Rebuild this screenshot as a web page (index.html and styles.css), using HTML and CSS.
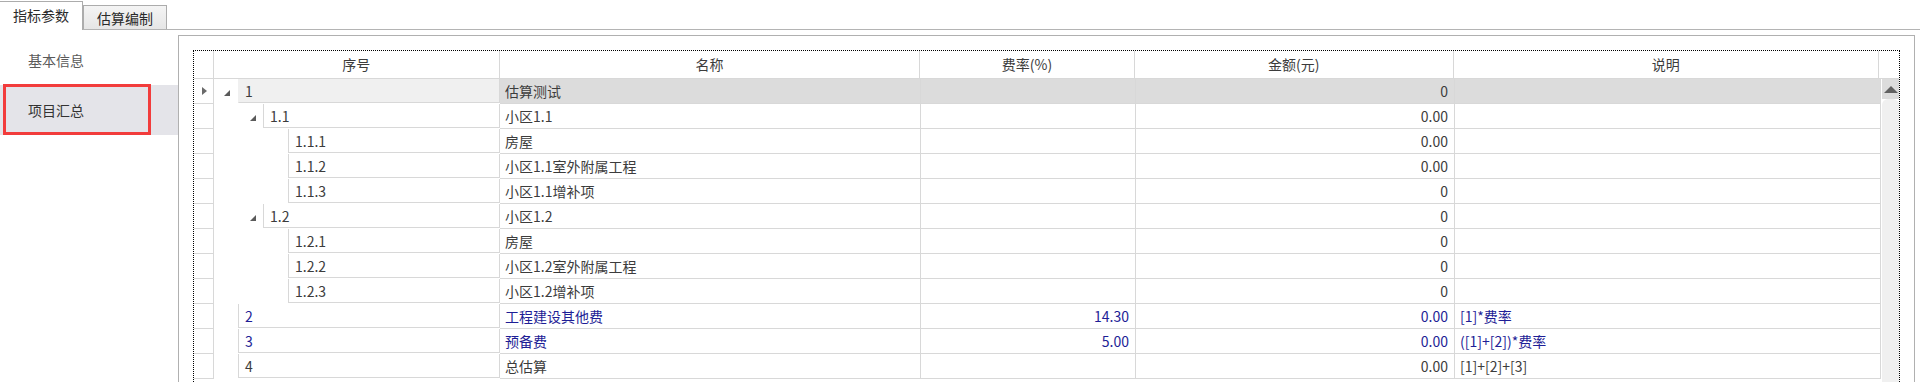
FILE: index.html
```html
<!DOCTYPE html>
<html lang="zh-CN">
<head>
  <meta charset="UTF-8" />
  <title>项目汇总</title>
  <link rel="stylesheet" href="styles.css">
</head>
<body>
  <nav class="tabs">
    <div class="tab active">指标参数</div>
    <div class="tab">估算编制</div>
  </nav>

  <main class="page">
    <aside class="menu">
      <div class="menu-item">基本信息</div>
      <div class="menu-item current">项目汇总</div>
    </aside>

    <section class="panel">
      <div class="grid">
        <div class="head">
          <div class="rh"></div>
          <div class="c-no">序号</div>
          <div class="c-name">名称</div>
          <div class="c-rate">费率(%)</div>
          <div class="c-amt">金额(元)</div>
          <div class="c-desc">说明</div>
          <div class="sb-head"></div>
        </div>

        <div class="body">
          <div class="rows">
            <div class="row focused">
              <div class="rh"><span class="cursor"></span></div>
              <div class="c-no"><span class="indent l1"><i class="exp"></i></span><span class="node">1</span></div>
              <div class="c-name">估算测试</div>
              <div class="c-rate"></div>
              <div class="c-amt">0</div>
              <div class="c-desc"></div>
            </div>
            <div class="row">
              <div class="rh"></div>
              <div class="c-no"><span class="indent l2"><i class="exp"></i></span><span class="node">1.1</span></div>
              <div class="c-name">小区1.1</div>
              <div class="c-rate"></div>
              <div class="c-amt">0.00</div>
              <div class="c-desc"></div>
            </div>
            <div class="row">
              <div class="rh"></div>
              <div class="c-no"><span class="indent l3"></span><span class="node">1.1.1</span></div>
              <div class="c-name">房屋</div>
              <div class="c-rate"></div>
              <div class="c-amt">0.00</div>
              <div class="c-desc"></div>
            </div>
            <div class="row">
              <div class="rh"></div>
              <div class="c-no"><span class="indent l3"></span><span class="node">1.1.2</span></div>
              <div class="c-name">小区1.1室外附属工程</div>
              <div class="c-rate"></div>
              <div class="c-amt">0.00</div>
              <div class="c-desc"></div>
            </div>
            <div class="row">
              <div class="rh"></div>
              <div class="c-no"><span class="indent l3"></span><span class="node">1.1.3</span></div>
              <div class="c-name">小区1.1增补项</div>
              <div class="c-rate"></div>
              <div class="c-amt">0</div>
              <div class="c-desc"></div>
            </div>
            <div class="row">
              <div class="rh"></div>
              <div class="c-no"><span class="indent l2"><i class="exp"></i></span><span class="node">1.2</span></div>
              <div class="c-name">小区1.2</div>
              <div class="c-rate"></div>
              <div class="c-amt">0</div>
              <div class="c-desc"></div>
            </div>
            <div class="row">
              <div class="rh"></div>
              <div class="c-no"><span class="indent l3"></span><span class="node">1.2.1</span></div>
              <div class="c-name">房屋</div>
              <div class="c-rate"></div>
              <div class="c-amt">0</div>
              <div class="c-desc"></div>
            </div>
            <div class="row">
              <div class="rh"></div>
              <div class="c-no"><span class="indent l3"></span><span class="node">1.2.2</span></div>
              <div class="c-name">小区1.2室外附属工程</div>
              <div class="c-rate"></div>
              <div class="c-amt">0</div>
              <div class="c-desc"></div>
            </div>
            <div class="row">
              <div class="rh"></div>
              <div class="c-no"><span class="indent l3"></span><span class="node">1.2.3</span></div>
              <div class="c-name">小区1.2增补项</div>
              <div class="c-rate"></div>
              <div class="c-amt">0</div>
              <div class="c-desc"></div>
            </div>
            <div class="row calc">
              <div class="rh"></div>
              <div class="c-no"><span class="indent l1"></span><span class="node">2</span></div>
              <div class="c-name">工程建设其他费</div>
              <div class="c-rate">14.30</div>
              <div class="c-amt">0.00</div>
              <div class="c-desc">[1]*费率</div>
            </div>
            <div class="row calc">
              <div class="rh"></div>
              <div class="c-no"><span class="indent l1"></span><span class="node">3</span></div>
              <div class="c-name">预备费</div>
              <div class="c-rate">5.00</div>
              <div class="c-amt">0.00</div>
              <div class="c-desc">([1]+[2])*费率</div>
            </div>
            <div class="row">
              <div class="rh"></div>
              <div class="c-no"><span class="indent l1"></span><span class="node">4</span></div>
              <div class="c-name">总估算</div>
              <div class="c-rate"></div>
              <div class="c-amt">0.00</div>
              <div class="c-desc">[1]+[2]+[3]</div>
            </div>
          </div>

          <div class="vscroll">
            <div class="sb-up"><i></i></div>
            <div class="sb-thumb"></div>
          </div>
        </div>
      </div>
    </section>
  </main>
</body>
</html>
```

FILE: styles.css
```css
html, body {
  height: 382px;
  overflow: hidden;
}

body {
  margin: 0;
  background: #ffffff;
  font-family: "Noto Sans CJK SC", "Microsoft YaHei", sans-serif;
  font-size: 14px;
  color: #3c3c3c;
}

/* tabs */
.tabs {
  display: flex;
  align-items: flex-end;
  height: 29px;
  border-bottom: 1px solid #b4b4b4;
}

.tab {
  box-sizing: border-box;
  height: 24px;
  padding: 0 13px;
  border: 1px solid #acacac;
  border-bottom: none;
  background: linear-gradient(#f4f4f4, #e6e6e6);
  line-height: 24px;
  color: #2a2a2a;
}

.tab.active {
  height: 29px;
  margin-bottom: -1px;
  padding-bottom: 1px;
  border-left: none;
  background: #ffffff;
  line-height: 27px;
}

/* layout */
.page {
  display: flex;
  margin-top: 5px;
}

.menu {
  width: 178px;
  flex-shrink: 0;
}

.menu-item {
  position: relative;
  height: 50px;
  padding-left: 28px;
  line-height: 50px;
  color: #5a5a5a;
}

.menu-item.current {
  background: #e4e4e9;
  color: #333;
}

.menu-item.current::after {
  content: "";
  position: absolute;
  left: 3px;
  top: -1px;
  width: 142px;
  height: 45px;
  border: 3px solid #f23c3c;
}

.panel {
  width: 1737px;
  height: 347px;
  padding: 14px 14px 0;
  box-sizing: border-box;
  border: 1px solid #b0b0b0;
  border-bottom: none;
  overflow: hidden;
}

/* grid */
.grid {
  border: 1px dotted #000;
  border-bottom: none;
}

.head, .row {
  display: flex;
}

.head > div {
  height: 27px;
  line-height: 27px;
  text-align: center;
  border-right: 1px solid #d8d8d8;
  border-bottom: 1px solid #d8d8d8;
}

.head .sb-head {
  width: 20px;
  border-right: none;
}

.rh {
  width: 19px;
  flex-shrink: 0;
}

.c-no   { width: 285px; }
.c-name { width: 420px; }
.c-rate { width: 214px; }
.c-amt  { width: 318px; }
.c-desc { width: 425px; }

.body {
  display: flex;
}

.row > div {
  height: 24px;
  line-height: 24px;
  border-right: 1px solid #d8d8d8;
  border-bottom: 1px solid #d8d8d8;
  white-space: nowrap;
}

.row .c-name, .row .c-desc {
  padding: 0 6px 0 5px;
  width: auto;
}

.row .c-name { flex: 0 0 409px; }
.row .c-desc { flex: 0 0 414px; }

.row .c-rate, .row .c-amt {
  text-align: right;
  padding-right: 6px;
}

.row .c-rate { width: 208px; }
.row .c-amt  { width: 312px; }

.row .c-no {
  display: flex;
  border-bottom: none;
}

.indent {
  display: flex;
  align-items: center;
  justify-content: flex-end;
  flex-shrink: 0;
  padding-right: 8px;
  box-sizing: border-box;
}

.indent.l1 { width: 24px; }
.indent.l2 { width: 49px; padding-right: 7px; }
.indent.l3 { width: 74px; }

.node {
  flex: 1;
  padding-left: 6px;
  border-left: 1px solid #d8d8d8;
  border-bottom: 1px solid #d8d8d8;
}

.exp {
  width: 0;
  height: 0;
  margin-top: 4px;
  border-left: 6px solid transparent;
  border-bottom: 6px solid #5a5a5a;
}

.rh .cursor {
  display: block;
  width: 0;
  height: 0;
  margin: 8px 0 0 8px;
  border-top: 4px solid transparent;
  border-bottom: 4px solid transparent;
  border-left: 5px solid #6a6a6a;
}

.row.focused .node {
  background: #f0f0f0;
  border-left-color: #f0f0f0;
}

.row.focused .c-name, .row.focused .c-rate,
.row.focused .c-amt, .row.focused .c-desc {
  background: #dcdcdc;
}

.row.calc {
  color: #1e1e96;
}

/* scrollbar */
.vscroll {
  width: 20px;
  display: flex;
  flex-direction: column;
  height: 303px;
}

.sb-up {
  height: 20px;
  margin-left: 1px;
  background: #dcdcdc;
  display: flex;
  align-items: center;
  justify-content: center;
}

.sb-up i {
  width: 0;
  height: 0;
  border-left: 7px solid transparent;
  border-right: 7px solid transparent;
  border-bottom: 7px solid #626262;
}

.sb-thumb {
  flex: 1;
  margin-left: 1px;
  background: #f0f0f0;
  border-radius: 6px 6px 0 0;
}
```
